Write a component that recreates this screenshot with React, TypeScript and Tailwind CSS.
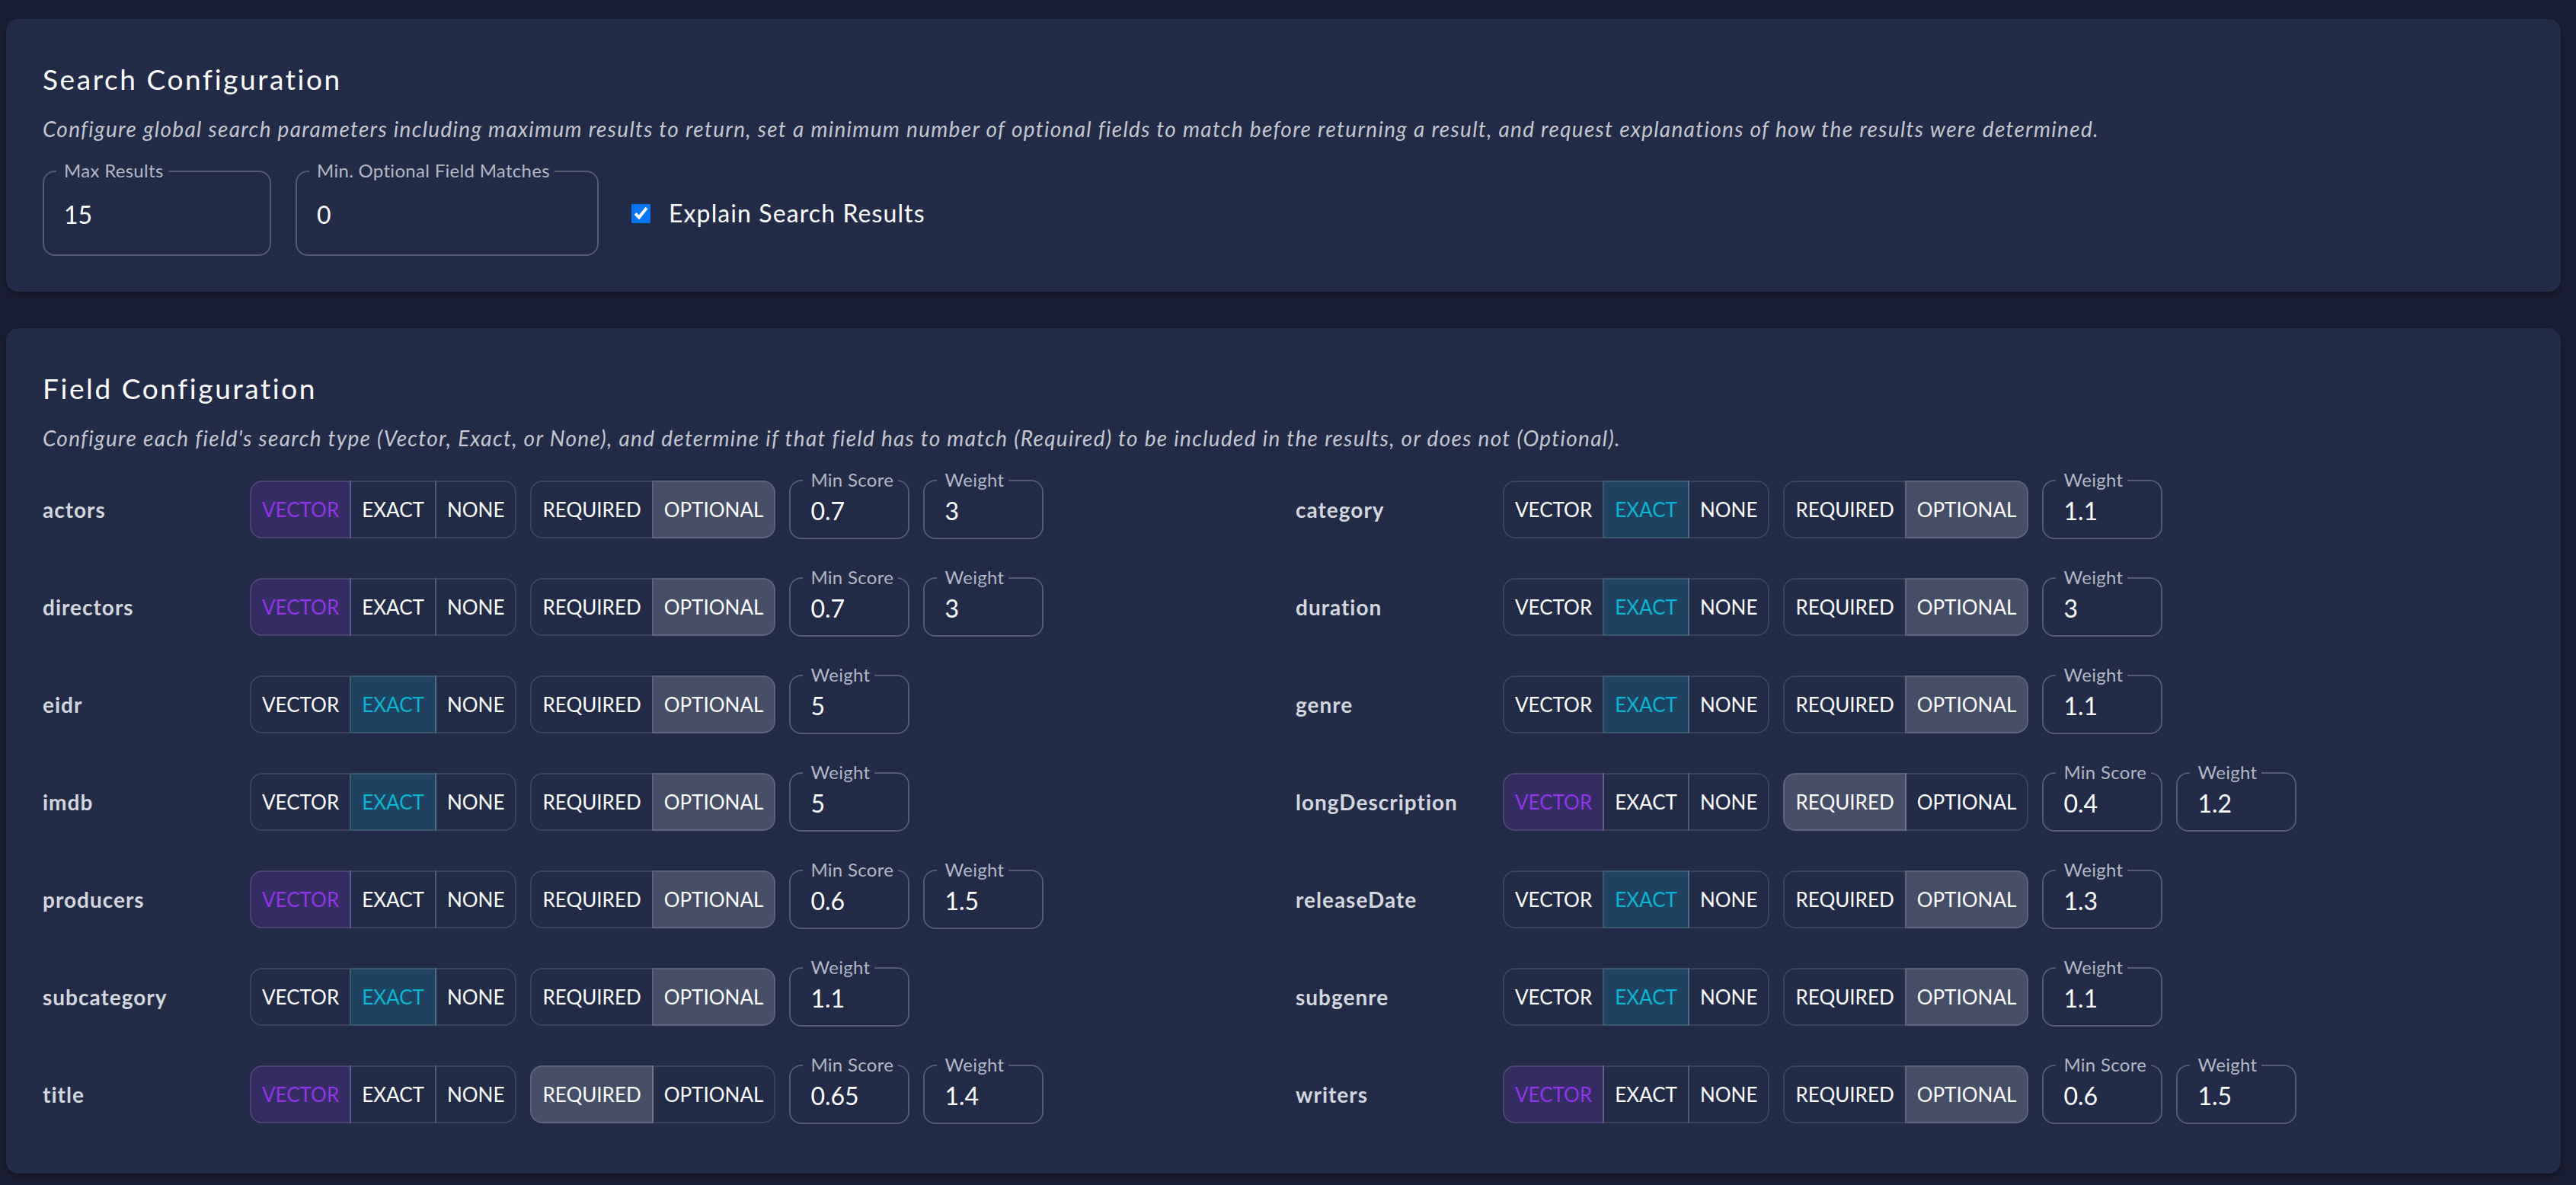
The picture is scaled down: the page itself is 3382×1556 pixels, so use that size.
import React from 'react';

type SearchType = 'VECTOR' | 'EXACT' | 'NONE';
type MatchType = 'REQUIRED' | 'OPTIONAL';

interface FieldConfig {
  name: string;
  type: SearchType;
  match: MatchType;
  minScore?: string;
  weight: string;
}

const leftFields: FieldConfig[] = [
  { name: 'actors', type: 'VECTOR', match: 'OPTIONAL', minScore: '0.7', weight: '3' },
  { name: 'directors', type: 'VECTOR', match: 'OPTIONAL', minScore: '0.7', weight: '3' },
  { name: 'eidr', type: 'EXACT', match: 'OPTIONAL', weight: '5' },
  { name: 'imdb', type: 'EXACT', match: 'OPTIONAL', weight: '5' },
  { name: 'producers', type: 'VECTOR', match: 'OPTIONAL', minScore: '0.6', weight: '1.5' },
  { name: 'subcategory', type: 'EXACT', match: 'OPTIONAL', weight: '1.1' },
  { name: 'title', type: 'VECTOR', match: 'REQUIRED', minScore: '0.65', weight: '1.4' },
];

const rightFields: FieldConfig[] = [
  { name: 'category', type: 'EXACT', match: 'OPTIONAL', weight: '1.1' },
  { name: 'duration', type: 'EXACT', match: 'OPTIONAL', weight: '3' },
  { name: 'genre', type: 'EXACT', match: 'OPTIONAL', weight: '1.1' },
  { name: 'longDescription', type: 'VECTOR', match: 'REQUIRED', minScore: '0.4', weight: '1.2' },
  { name: 'releaseDate', type: 'EXACT', match: 'OPTIONAL', weight: '1.3' },
  { name: 'subgenre', type: 'EXACT', match: 'OPTIONAL', weight: '1.1' },
  { name: 'writers', type: 'VECTOR', match: 'OPTIONAL', minScore: '0.6', weight: '1.5' },
];

const activeStyles: Record<string, string> = {
  VECTOR: 'bg-[#352c62] text-[#9333ea]',
  EXACT: 'bg-[#1e425f] text-[#06b6d4]',
  NONE: 'bg-[#464e68] text-white',
  REQUIRED: 'bg-[#464e68] text-white',
  OPTIONAL: 'bg-[#464e68] text-white',
};

function ToggleGroup({ options, value }: { options: string[]; value: string }) {
  return (
    <div className="flex h-[76px]">
      {options.map((opt, i) => (
        <button
          key={opt}
          className={`h-full px-[14px] text-[26px] leading-none border-2 border-[rgba(255,255,255,0.12)] ${
            i === 0 ? 'rounded-l-[16px]' : '-ml-[2px]'
          } ${i === options.length - 1 ? 'rounded-r-[16px]' : ''} ${
            opt === value ? activeStyles[opt] : 'text-white'
          }`}
        >
          {opt}
        </button>
      ))}
    </div>
  );
}

function OutlinedInput({
  label,
  value,
  className,
}: {
  label: string;
  value: string;
  className: string;
}) {
  return (
    <div
      className={`relative flex items-center rounded-[16px] border-2 border-[rgba(255,255,255,0.23)] pl-[26px] ${className}`}
    >
      <span className="absolute -top-[14px] left-[16px] bg-[#222b47] pl-[10px] pr-[6px] text-[24px] leading-[24px] tracking-[0.3px] text-[#b3b7c4]">
        {label}
      </span>
      <span className="pt-[4px] text-[32px] leading-[40px] text-white">{value}</span>
    </div>
  );
}

function FieldRow({ field }: { field: FieldConfig }) {
  return (
    <div className="flex h-[78px] items-center gap-[18px]">
      <div className="w-[254px] text-[28px] font-bold tracking-[1px] text-[#d3d6df]">
        {field.name}
      </div>
      <ToggleGroup options={['VECTOR', 'EXACT', 'NONE']} value={field.type} />
      <ToggleGroup options={['REQUIRED', 'OPTIONAL']} value={field.match} />
      {field.minScore && (
        <OutlinedInput label="Min Score" value={field.minScore} className="h-[78px] w-[158px]" />
      )}
      <OutlinedInput label="Weight" value={field.weight} className="h-[78px] w-[158px]" />
    </div>
  );
}

export default function App() {
  return (
    <div
      className="flex min-h-screen flex-col gap-[48px] bg-[#1a1e35] pb-[14px] pl-[8px] pr-[20px] pt-[25px]"
      style={{ fontFamily: 'Lato, "Noto Sans", sans-serif' }}
    >
      {/* search config */}
      <section className="rounded-[16px] bg-[#222b47] px-[48px] pb-[47px] pt-[48px] shadow-[0_4px_10px_rgba(0,0,0,0.35)]">
        <h2 className="text-[37px] leading-[62px] tracking-[2.6px] text-white">
          Search Configuration
        </h2>
        <p className="mt-[14px] text-[28px] italic leading-[40px] tracking-[1.3px] text-[#c4c7d1]">
          Configure global search parameters including maximum results to return, set a minimum
          number of optional fields to match before returning a result, and request explanations of
          how the results were determined.
        </p>
        <div className="mt-[35px] flex items-center gap-[32px]">
          <OutlinedInput label="Max Results" value="15" className="h-[112px] w-[300px]" />
          <OutlinedInput
            label="Min. Optional Field Matches"
            value="0"
            className="h-[112px] w-[398px]"
          />
          <label className="ml-[11px] flex items-center gap-[24px]">
            <input type="checkbox" checked readOnly className="h-[25px] w-[25px]" />
            <span className="text-[32px] tracking-[1.1px] text-white">Explain Search Results</span>
          </label>
        </div>
      </section>

      {/* field config */}
      <section className="rounded-[16px] bg-[#222b47] px-[48px] pb-[65px] pt-[48px] shadow-[0_4px_10px_rgba(0,0,0,0.35)]">
        <h2 className="text-[37px] leading-[62px] tracking-[2.6px] text-white">
          Field Configuration
        </h2>
        <p className="mt-[14px] text-[28px] italic leading-[40px] tracking-[1.3px] text-[#c4c7d1]">
          Configure each field's search type (Vector, Exact, or None), and determine if that field
          has to match (Required) to be included in the results, or does not (Optional).
        </p>
        <div className="mt-[35px] grid grid-cols-2 gap-x-[32px]">
          <div className="flex flex-col gap-[50px]">
            {leftFields.map((f) => (
              <FieldRow key={f.name} field={f} />
            ))}
          </div>
          <div className="flex flex-col gap-[50px]">
            {rightFields.map((f) => (
              <FieldRow key={f.name} field={f} />
            ))}
          </div>
        </div>
      </section>
    </div>
  );
}
